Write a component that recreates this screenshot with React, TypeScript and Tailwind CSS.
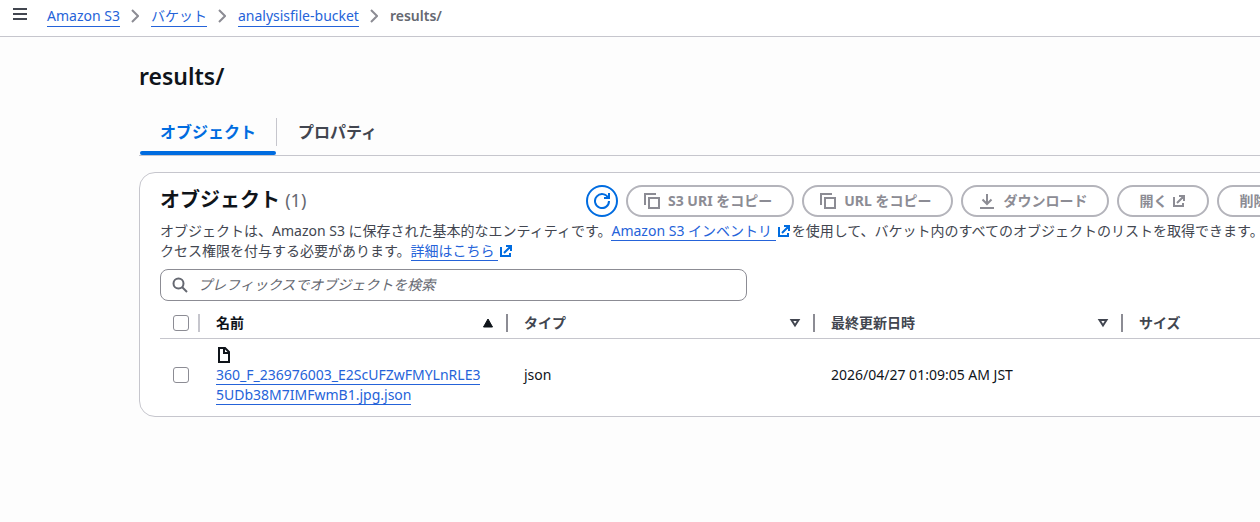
import type { ReactNode } from "react";

const linkClass =
  "text-[#2563d9] border-b border-[#2563d9] hover:text-[#002b66]";

function Icon({
  children,
  className = "size-4",
}: {
  children: ReactNode;
  className?: string;
}) {
  return (
    <svg
      viewBox="0 0 16 16"
      fill="none"
      stroke="currentColor"
      strokeWidth="2"
      aria-hidden="true"
      className={`shrink-0 ${className}`}
    >
      {children}
    </svg>
  );
}

const CopyIcon = () => (
  <Icon>
    <path d="M1 12V1h11" />
    <path d="M5 5h10v10H5z" />
  </Icon>
);

const DownloadIcon = () => (
  <Icon>
    <path d="M1 15h14M8 1v10M3.5 6.5 8 11l4.5-4.5" />
  </Icon>
);

const ExternalIcon = () => (
  <Icon className="inline-block size-4 align-[-3px]">
    <path d="M8 3h5v5M6 10l7-7M3 4v9h9v-3" />
  </Icon>
);

function ActionButton({
  icon,
  children,
}: {
  icon?: ReactNode;
  children: ReactNode;
}) {
  return (
    <button
      type="button"
      className={`flex h-8 shrink-0 items-center gap-2 rounded-full border-2 border-[#b4b4bb] pr-5 font-bold whitespace-nowrap text-[#8c8c94] ${icon ? "pl-4" : "pl-5"}`}
    >
      {icon}
      {children}
    </button>
  );
}

function Breadcrumbs() {
  return (
    <nav aria-label="breadcrumb" className="flex items-center gap-3">
      {["Amazon S3", "バケット", "analysisfile-bucket"].map((item) => (
        <span key={item} className="flex items-center gap-[11px]">
          <a href="#" className={linkClass}>
            {item}
          </a>
          <svg
            viewBox="0 0 8 14"
            fill="none"
            stroke="#8c8c94"
            strokeWidth="2"
            aria-hidden="true"
            className="h-3.5 w-2"
          >
            <path d="M1 1l6 6-6 6" />
          </svg>
        </span>
      ))}
      <span className="font-semibold text-[#656871]">results/</span>
    </nav>
  );
}

function Checkbox({ label }: { label: string }) {
  return (
    <input
      type="checkbox"
      aria-label={label}
      className="block size-4 appearance-none rounded-[3px] border border-[#8c8c94] bg-white checked:bg-[#006ce0]"
    />
  );
}

const columns = [
  { label: "名前", sorted: true },
  { label: "タイプ", sorted: false },
  { label: "最終更新日時", sorted: false },
  { label: "サイズ", sorted: false },
];

function ObjectTable() {
  return (
    <table className="w-full table-fixed text-left">
      <colgroup>
        <col className="w-10" />
        <col className="w-[308px]" />
        <col className="w-[307px]" />
        <col className="w-[308px]" />
        <col />
      </colgroup>
      <thead>
        <tr className="h-[29px] border-b border-[#c6c6cd]">
          <th className="pl-[13px]">
            <div className="flex items-center justify-between">
              <Checkbox label="すべて選択" />
              <span className="h-[18px] w-0.5 bg-[#c6c6cd]" />
            </div>
          </th>
          {columns.map(({ label, sorted }, idx) => (
            <th key={label} className="pl-4">
              <div
                className={`flex items-center ${sorted ? "text-[#0f141a]" : "text-[#424650]"}`}
              >
                <span className="grow">{label}</span>
                {idx < 3 && (
                  <>
                    <Icon>
                      {sorted ? (
                        <path
                          d="M8 4l4.5 8h-9z"
                          fill="currentColor"
                          strokeWidth="1"
                        />
                      ) : (
                        <path d="M4.5 5h7L8 10.5z" />
                      )}
                    </Icon>
                    <span className="ml-2.5 h-[18px] w-0.5 bg-[#8c8c94]" />
                  </>
                )}
              </div>
            </th>
          ))}
        </tr>
      </thead>
      <tbody>
        <tr>
          <td className="pl-[13px]">
            <Checkbox label="オブジェクトを選択" />
          </td>
          <td className="py-1.5 pr-5 pl-4">
            <Icon className="my-0.5 size-4 text-[#0f141a]">
              <path d="M3 1h6l4 4v10H3zM8 1v5h5" />
            </Icon>
            <a href="#" className={`break-all ${linkClass}`}>
              360_F_236976003_E2ScUFZwFMYLnRLE35UDb38M7IMFwmB1.jpg.json
            </a>
          </td>
          <td className="pl-4">json</td>
          <td className="pl-4">2026/04/27 01:09:05 AM JST</td>
          <td />
        </tr>
      </tbody>
    </table>
  );
}

export default function App() {
  return (
    <div className="min-h-screen overflow-x-hidden bg-[#fdfdfd] font-['Noto_Sans','Noto_Sans_CJK_JP',sans-serif] text-sm leading-5 text-[#0f141a]">
      <header className="flex h-[37px] items-center gap-[19px] border-b border-[#c6c6cd] bg-white pb-1 pl-3">
        <button
          type="button"
          aria-label="メニュー"
          className="pb-1 text-[#424650]"
        >
          <Icon>
            <path d="M1 3h14M1 8h14M1 13h14" />
          </Icon>
        </button>
        <Breadcrumbs />
      </header>

      <main className="min-w-[1500px] pt-6 pl-[139px]">
        <h1 className="text-[23px] leading-[30px] font-semibold">results/</h1>

        <div
          role="tablist"
          className="mt-4 flex border-b border-[#c6c6cd] text-base leading-6 font-bold"
        >
          <button
            type="button"
            role="tab"
            aria-selected="true"
            className="ml-px flex flex-col text-[#006ce0]"
          >
            <span className="mt-1.5 px-5 py-[7px]">オブジェクト</span>
            <span className="h-1 w-full rounded-xs bg-[#006ce0]" />
          </button>
          <span className="mt-[11px] h-7 w-px bg-[#c6c6cd]" />
          <button
            type="button"
            role="tab"
            aria-selected="false"
            className="mt-1.5 mb-1 ml-px px-5 py-[7px] text-[#424650]"
          >
            プロパティ
          </button>
        </div>

        <section className="mt-4 rounded-2xl border border-[#c6c6cd] bg-white px-5 pt-3 pb-[5px]">
          <div className="flex">
            <h2 className="w-[426px] shrink-0 text-xl leading-[30px] font-bold">
              オブジェクト{" "}
              <span className="text-lg font-normal text-[#656871]">(1)</span>
            </h2>
            <div className="flex gap-2">
              <button
                type="button"
                aria-label="更新"
                className="flex size-8 shrink-0 items-center justify-center rounded-full border-2 border-[#006ce0] text-[#006ce0]"
              >
                <Icon>
                  <path d="M10 5h5V0" />
                  <path d="M15 8A7 7 0 1 1 14.3 5" />
                </Icon>
              </button>
              <ActionButton icon={<CopyIcon />}>S3 URI をコピー</ActionButton>
              <ActionButton icon={<CopyIcon />}>URL をコピー</ActionButton>
              <ActionButton icon={<DownloadIcon />}>ダウンロード</ActionButton>
              <ActionButton>
                <span className="-mr-1">開く</span>
                <ExternalIcon />
              </ActionButton>
              <ActionButton>削除</ActionButton>
            </div>
          </div>

          <p className="mt-1 text-[#424650]">
            オブジェクトは、Amazon S3 に保存された基本的なエンティティです。
            <a href="#" className={linkClass}>
              Amazon S3 インベントリ{" "}
            </a>
            <span className="text-[#006ce0]">
              <ExternalIcon />
            </span>
            を使用して、バケット内のすべてのオブジェクトのリストを取得できます。
            <br />
            クセス権限を付与する必要があります。
            <a href="#" className={linkClass}>
              詳細はこちら{" "}
            </a>
            <span className="text-[#006ce0]">
              <ExternalIcon />
            </span>
          </p>

          <label className="my-2 flex h-8 w-[587px] items-center gap-2.5 rounded-lg border border-[#8c8c94] bg-white px-[11px]">
            <Icon className="size-4 text-[#656871]">
              <circle cx="6.5" cy="6.5" r="5" />
              <path d="M10 10l5 5" />
            </Icon>
            <input
              type="search"
              aria-label="オブジェクトを検索"
              placeholder="プレフィックスでオブジェクトを検索"
              className="grow outline-none placeholder:text-[#656871] placeholder:italic"
            />
          </label>

          <ObjectTable />
        </section>
      </main>
    </div>
  );
}
